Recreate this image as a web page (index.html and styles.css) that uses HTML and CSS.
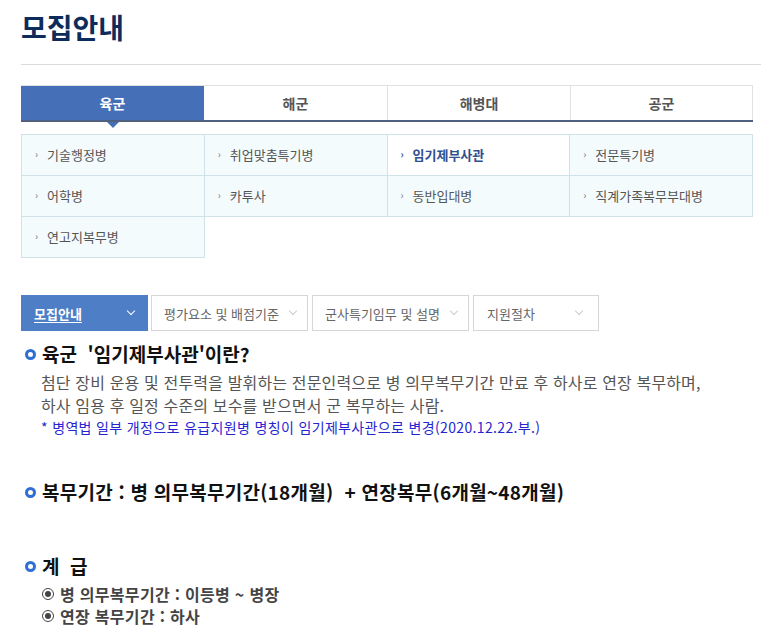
FILE: index.html
```html
<!DOCTYPE html>
<html lang="ko">
<head>
<meta charset="utf-8">
<link rel="stylesheet" href="styles.css">
</head>
<body>
<div class="page">
  <h1 class="title">모집안내</h1>
  <div class="rule"></div>

  <ul class="tabs">
    <li class="tab active">육군</li>
    <li class="tab">해군</li>
    <li class="tab">해병대</li>
    <li class="tab">공군</li>
  </ul>

  <ul class="subs">
    <li class="sub">기술행정병</li>
    <li class="sub">취업맞춤특기병</li>
    <li class="sub on">임기제부사관</li>
    <li class="sub">전문특기병</li>
    <li class="sub">어학병</li>
    <li class="sub">카투사</li>
    <li class="sub">동반입대병</li>
    <li class="sub">직계가족복무부대병</li>
    <li class="sub">연고지복무병</li>
  </ul>

  <div class="drops">
    <div class="drop d1 active"><span class="lbl">모집안내</span><span class="chev"></span></div>
    <div class="drop d2"><span class="lbl">평가요소 및 배점기준</span><span class="chev"></span></div>
    <div class="drop d3"><span class="lbl">군사특기임무 및 설명</span><span class="chev"></span></div>
    <div class="drop d4"><span class="lbl">지원절차</span><span class="chev"></span></div>
  </div>

  <section class="sec s1">
    <h2 class="head"><span class="dot"></span>육군&nbsp; '임기제부사관'이란?</h2>
    <p class="desc">첨단 장비 운용 및 전투력을 발휘하는 전문인력으로 병 의무복무기간 만료 후 하사로 연장 복무하며,<br>하사 임용 후 일정 수준의 보수를 받으면서 군 복무하는 사람.</p>
    <p class="note">* 병역법 일부 개정으로 유급지원병 명칭이 임기제부사관으로 변경(2020.12.22.부.)</p>
  </section>

  <section class="sec s2">
    <h2 class="head wide"><span class="dot"></span>복무기간 : 병 의무복무기간(18개월)&nbsp; + 연장복무(6개월~48개월)</h2>
  </section>

  <section class="sec s3">
    <h2 class="head big"><span class="dot"></span>계&nbsp; 급</h2>
    <ul class="ranks">
      <li><span class="rad"></span>병 의무복무기간 : 이등병 ~ 병장</li>
      <li><span class="rad"></span>연장 복무기간 : 하사</li>
    </ul>
  </section>
</div>
</body>
</html>
```

FILE: styles.css
```css
* { box-sizing: border-box; margin: 0; padding: 0; }
html, body { background: #fff; }
body {
  font-family: "Noto Sans CJK KR", "Noto Sans", sans-serif;
  color: #333;
}
ul { list-style: none; }

.page { padding: 0 0 0 21px; width: 775px; }

.title {
  font-size: 28px;
  font-weight: 700;
  color: #0d2c5b;
  line-height: 30px;
  padding-top: 12px;
}
.rule {
  margin-top: 22px;
  width: 740px;
  height: 1px;
  background: #dcdcdc;
}

.tabs {
  margin-top: 20px;
  width: 732px;
  display: grid;
  grid-template-columns: 183px 184px 183px 182px;
  border-top: 1px solid #e1e1e1;
  border-bottom: 2px solid #4e6180;
}
.tab {
  position: relative;
  height: 34px;
  line-height: 34px;
  text-align: center;
  font-size: 14px;
  font-weight: 700;
  color: #555;
  border-right: 1px solid #e1e1e1;
}
.tab.active {
  background: #4570b8;
  color: #fff;
  border-right: none;
}
.tab.active::after {
  content: "";
  position: absolute;
  left: 50%;
  bottom: -8px;
  margin-left: -6px;
  border-left: 6px solid transparent;
  border-right: 6px solid transparent;
  border-top: 6px solid #4570b8;
}

.subs {
  margin-top: 12px;
  width: 732px;
  display: grid;
  grid-template-columns: repeat(4, 1fr);
  border-left: 1px solid #cfe2e7;
  border-top: 1px solid #cfe2e7;
}
.sub {
  height: 41px;
  line-height: 40px;
  background: #f3fbfd;
  border-right: 1px solid #cfe2e7;
  border-bottom: 1px solid #cfe2e7;
  font-size: 13px;
  color: #555;
  padding-left: 25px;
  position: relative;
}
.sub::before {
  content: "›";
  position: absolute;
  left: 13px;
  top: -1px;
  font-size: 10px;
  color: #777;
}
.sub.on {
  background: #fff;
  color: #2f4f8f;
  font-weight: 700;
}
.sub.on::before { color: #2f4f8f; }

.drops {
  margin-top: 37px;
  display: flex;
  gap: 3px;
  height: 36px;
}
.drop {
  display: flex;
  align-items: center;
  justify-content: space-between;
  border: 1px solid #d6d6d6;
  font-size: 13px;
  color: #666;
  padding: 0 11px 0 12px;
}
.d1 { width: 127px; }
.d2 { width: 157px; }
.d3 { width: 157px; margin-left: 1px; }
.d4 { width: 126px; margin-left: 1px; padding-left: 13px; padding-right: 16px; }
.drop.active {
  background: #4d7ec6;
  border-color: #4d7ec6;
  color: #fff;
  font-weight: 700;
}
.drop.active .lbl { text-decoration: underline; text-underline-offset: 3px; }
.chev {
  width: 6px;
  height: 6px;
  border-right: 1px solid #ccc;
  border-bottom: 1px solid #ccc;
  transform: rotate(45deg);
  margin-top: -4px;
}
.drop.active .chev {
  border-color: #fff;
  border-width: 0 1.5px 1.5px 0;
  margin-right: 2px;
}

.sec { padding-left: 3px; }
.head {
  display: flex;
  align-items: center;
  font-size: 19px;
  font-weight: 700;
  color: #111;
  line-height: 24px;
}
.head.wide { letter-spacing: 0.25px; }
.dot {
  width: 11px;
  height: 11px;
  border-radius: 50%;
  border: 3px solid #2f6fd3;
  margin-right: 6px;
  margin-left: 1px;
  flex: none;
}
.s1 { margin-top: 11px; }
.desc {
  margin-top: 5px;
  padding-left: 17px;
  font-size: 16px;
  line-height: 23px;
  color: #555;
  letter-spacing: 0.15px;
}
.note {
  padding-left: 17px;
  font-size: 14px;
  line-height: 20px;
  color: #2525d0;
  letter-spacing: 0.35px;
}
.s2 { margin-top: 43px; }
.s3 { margin-top: 50px; }
.head.big { font-size: 19px; }
.ranks {
  margin-top: 5px;
  padding-left: 18px;
}
.ranks li {
  display: flex;
  align-items: center;
  font-size: 16px;
  font-weight: 700;
  color: #444;
  line-height: 22px;
  letter-spacing: 0.3px;
}
.rad {
  width: 12px;
  height: 12px;
  border-radius: 50%;
  border: 1px solid #444;
  margin-right: 6px;
  display: flex;
  align-items: center;
  justify-content: center;
  flex: none;
}
.rad::after {
  content: "";
  width: 6px;
  height: 6px;
  border-radius: 50%;
  background: #444;
}
```
